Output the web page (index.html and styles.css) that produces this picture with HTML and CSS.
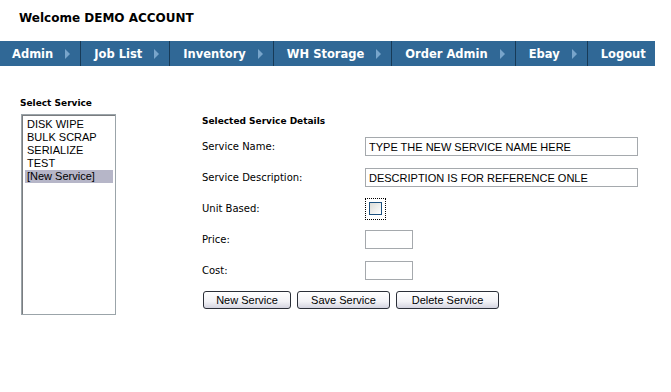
FILE: index.html
```html
<!DOCTYPE html>
<html lang="en">
<head>
  <meta charset="UTF-8" />
  <title>Service Setup | DEMO ACCOUNT</title>
  <link rel="stylesheet" href="styles.css">
</head>
<body>
  <div class="welcome">Welcome DEMO ACCOUNT</div>

  <nav class="menu">
    <a class="menu-item">Admin <span class="arrow"></span></a>
    <a class="menu-item">Job List <span class="arrow"></span></a>
    <a class="menu-item">Inventory <span class="arrow"></span></a>
    <a class="menu-item">WH Storage <span class="arrow"></span></a>
    <a class="menu-item">Order Admin <span class="arrow"></span></a>
    <a class="menu-item">Ebay <span class="arrow"></span></a>
    <a class="menu-item last">Logout</a>
  </nav>

  <div class="content">
    <div class="services">
      <h3>Select Service</h3>
      <div class="listbox">
        <div class="option">DISK WIPE</div>
        <div class="option">BULK SCRAP</div>
        <div class="option">SERIALIZE</div>
        <div class="option">TEST</div>
        <div class="option selected">[New Service]</div>
      </div>
    </div>

    <form class="details">
      <h3>Selected Service Details</h3>

      <div class="row">
        <label>Service Name:</label>
        <input type="text" class="wide" value="TYPE THE NEW SERVICE NAME HERE" />
      </div>

      <div class="row">
        <label>Service Description:</label>
        <input type="text" class="wide" value="DESCRIPTION IS FOR REFERENCE ONLE" />
      </div>

      <div class="row">
        <label>Unit Based:</label>
        <span class="focus"><span class="checkbox"></span></span>
      </div>

      <div class="row">
        <label>Price:</label>
        <input type="text" class="short" />
      </div>

      <div class="row">
        <label>Cost:</label>
        <input type="text" class="short" />
      </div>

      <div class="actions">
        <button type="button" class="btn">New Service</button>
        <button type="button" class="btn">Save Service</button>
        <button type="button" class="btn">Delete Service</button>
      </div>
    </form>
  </div>
</body>
</html>
```

FILE: styles.css
```css
body {
  margin: 0;
  background: #ffffff;
  color: #000;
  font-family: 'DejaVu Sans', Verdana, sans-serif;
}

.welcome {
  height: 31px;
  padding: 10px 0 0 19px;
  font-size: 12px;
  font-weight: bold;
  line-height: 16px;
}

.menu {
  display: flex;
  width: 655px;
  height: 25px;
  background: #306896;
}

.menu-item {
  display: flex;
  align-items: center;
  padding: 0 10px 0 13px;
  border-right: 1px solid #173a57;
  color: #fff;
  font-size: 11.5px;
  font-weight: bold;
  white-space: pre;
}

.menu-item:first-child {
  padding-left: 12px;
}

.menu-item.last {
  flex: 1;
  border-right: none;
}

.arrow {
  width: 0;
  height: 0;
  margin-left: 8px;
  border-top: 5px solid transparent;
  border-bottom: 5px solid transparent;
  border-left: 5px solid #78a5cb;
}

.content {
  display: flex;
  padding: 32px 0 0 20px;
}

h3 {
  margin: 0;
  font-size: 9px;
  line-height: 11px;
  font-weight: bold;
}

.services h3 {
  margin-bottom: 5px;
}

.listbox {
  box-sizing: border-box;
  width: 95px;
  height: 201px;
  margin-left: 1px;
  padding: 3px 2px 0 3px;
  border: 1px solid #9ba4a9;
  box-shadow: inset 1px 1px 0 #7a7d80;
  font-family: 'Liberation Sans', Arial, sans-serif;
  font-size: 11px;
}

.option {
  height: 13px;
  line-height: 13px;
  padding-left: 2px;
}

.option.selected {
  background: #b6b6c8;
}

.details {
  margin: 0 0 0 86px;
  padding-top: 18px;
}

.details h3 {
  margin-bottom: 4px;
}

.row {
  display: flex;
  align-items: center;
  height: 31px;
}

.row label {
  width: 163px;
  font-size: 10px;
}

input[type="text"] {
  box-sizing: border-box;
  height: 19px;
  margin: 0;
  padding: 0 3px;
  border: 1px solid #a5a9ad;
  font-family: 'Liberation Sans', Arial, sans-serif;
  font-size: 11px;
  color: #000;
}

input.wide {
  width: 273px;
}

input.short {
  width: 48px;
}

.focus {
  box-sizing: border-box;
  display: flex;
  align-items: center;
  justify-content: center;
  width: 21px;
  height: 22px;
  border: 1px dotted #000;
}

.checkbox {
  box-sizing: border-box;
  width: 13px;
  height: 13px;
  border: 1px solid #1c5180;
  background: linear-gradient(135deg, #dcdcd7, #ffffff);
}

.actions {
  display: flex;
  gap: 6px;
  margin: 5px 0 0 1px;
}

.btn {
  box-sizing: border-box;
  height: 18px;
  padding: 0;
  border: 1px solid #2b2f38;
  border-radius: 3px;
  background: linear-gradient(#ffffff, #f2f2f6 60%, #d4d4e0);
  font-family: 'Liberation Sans', Arial, sans-serif;
  font-size: 11px;
  line-height: 16px;
  color: #000;
  white-space: nowrap;
}

.btn:nth-child(1) { width: 88px; }
.btn:nth-child(2) { width: 93px; }
.btn:nth-child(3) { width: 103px; }
```
